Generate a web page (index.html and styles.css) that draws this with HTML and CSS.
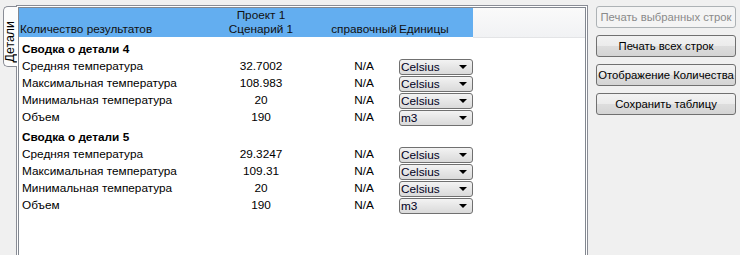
FILE: index.html
```html
<!DOCTYPE html>
<html lang="ru">
<head>
  <meta charset="UTF-8">
  <title>Детали</title>
  <link rel="stylesheet" href="styles.css">
</head>
<body>
  <div class="window">
    <div class="tabs">
      <div class="tab"><span>Детали</span></div>
      <div class="pane">
        <div class="grid">
          <table class="results">
            <colgroup>
              <col class="c-name">
              <col class="c-val">
              <col class="c-ref">
              <col class="c-unit">
              <col>
            </colgroup>
            <thead>
              <tr>
                <th class="h-name">Количество результатов</th>
                <th>Проект 1<br>Сценарий 1</th>
                <th>справочный</th>
                <th class="h-unit">Единицы</th>
                <th class="h-rest"></th>
              </tr>
            </thead>
            <tbody>
              <tr class="group"><td colspan="5">Сводка о детали 4</td></tr>
              <tr>
                <td class="name">Средняя температура</td><td class="val">32.7002</td><td class="val">N/A</td>
                <td class="unit"><div class="combo">Celsius</div></td><td></td>
              </tr>
              <tr>
                <td class="name">Максимальная температура</td><td class="val">108.983</td><td class="val">N/A</td>
                <td class="unit"><div class="combo">Celsius</div></td><td></td>
              </tr>
              <tr>
                <td class="name">Минимальная температура</td><td class="val">20</td><td class="val">N/A</td>
                <td class="unit"><div class="combo">Celsius</div></td><td></td>
              </tr>
              <tr>
                <td class="name">Объем</td><td class="val">190</td><td class="val">N/A</td>
                <td class="unit"><div class="combo">m3</div></td><td></td>
              </tr>
              <tr class="group"><td colspan="5">Сводка о детали 5</td></tr>
              <tr>
                <td class="name">Средняя температура</td><td class="val">29.3247</td><td class="val">N/A</td>
                <td class="unit"><div class="combo">Celsius</div></td><td></td>
              </tr>
              <tr>
                <td class="name">Максимальная температура</td><td class="val">109.31</td><td class="val">N/A</td>
                <td class="unit"><div class="combo">Celsius</div></td><td></td>
              </tr>
              <tr>
                <td class="name">Минимальная температура</td><td class="val">20</td><td class="val">N/A</td>
                <td class="unit"><div class="combo">Celsius</div></td><td></td>
              </tr>
              <tr>
                <td class="name">Объем</td><td class="val">190</td><td class="val">N/A</td>
                <td class="unit"><div class="combo">m3</div></td><td></td>
              </tr>
            </tbody>
          </table>
        </div>
      </div>
    </div>

    <div class="side">
      <button class="btn" disabled>Печать выбранных строк</button>
      <button class="btn">Печать всех строк</button>
      <button class="btn">Отображение Количества</button>
      <button class="btn">Сохранить таблицу</button>
    </div>
  </div>
</body>
</html>
```

FILE: styles.css
```css
html, body {
  margin: 0;
  padding: 0;
}

body {
  background: #f0f0f0;
  font-family: "Liberation Sans", Arial, sans-serif;
  font-size: 11.8px;
  color: #000;
  overflow: hidden;
}

.window {
  display: flex;
  height: 255px;
}

/* вкладки слева */
.tabs {
  display: flex;
  align-items: flex-start;
  padding: 5px 0 0 3px;
}

.tab {
  position: relative;
  z-index: 1;
  width: 14px;
  height: 61px;
  box-sizing: border-box;
  padding-top: 14px;
  margin-top: 1px;
  margin-right: -1px;
  background: #fcfcfc;
  border: 1px solid #898c95;
  border-right: 0;
  border-radius: 5px 0 0 5px;
}
.tab span {
  display: block;
  writing-mode: vertical-rl;
  transform: rotate(180deg);
  font-size: 12.4px;
  line-height: 13px;
}

.pane {
  width: 572px;
  height: 262px;
  padding: 1px;
  background: #fff;
  border: 1px solid #898c95;
  box-sizing: border-box;
}

.grid {
  height: 100%;
  border: 1px solid #828790;
  box-sizing: border-box;
  background: #fff;
}

.results {
  width: 566px;
  table-layout: fixed;
  border-collapse: collapse;
  border-spacing: 0;
}
.c-name { width: 174px; }
.c-val  { width: 136px; }
.c-ref  { width: 70px; }
.c-unit { width: 74px; }

.results th {
  height: 28px;
  padding: 0 0 1px;
  box-sizing: border-box;
  vertical-align: bottom;
  font-weight: normal;
  line-height: 14px;
  color: #111;
  background: #63aef0;
  white-space: nowrap;
}
.results .h-name {
  text-align: left;
  padding-left: 1px;
}
.results .h-unit {
  text-align: left;
}
.results .h-rest {
  background: linear-gradient(#fafafa, #f1f2f4);
  border-bottom: 1px solid #e3e4e6;
}

.results td {
  height: 17px;
  padding: 0;
  line-height: 17px;
  white-space: nowrap;
}
.results .group td {
  height: 20px;
  padding: 3px 0 0 3px;
  font-weight: bold;
  box-sizing: border-box;
}
.results .name {
  padding-left: 3px;
}
.results .val {
  text-align: center;
}
.results .unit {
  height: 16px;
  vertical-align: top;
  padding-top: 1px;
}

.combo {
  position: relative;
  height: 16px;
  box-sizing: border-box;
  padding-left: 1px;
  line-height: 14px;
  border: 1px solid #707070;
  border-radius: 3px;
  background: linear-gradient(#f3f3f3, #e6e6e6 50%, #dadada);
  color: #000022;
}
.combo::after {
  content: "";
  position: absolute;
  right: 5px;
  top: 5px;
  border-left: 4px solid transparent;
  border-right: 4px solid transparent;
  border-top: 4px solid #000;
}

/* кнопки справа */
.side {
  display: flex;
  flex-direction: column;
  gap: 7px;
  width: 140px;
  margin-left: 8px;
  padding-top: 6px;
}

.btn {
  height: 22px;
  padding: 0;
  font-family: inherit;
  font-size: 11.3px;
  color: #000;
  white-space: nowrap;
  border: 1px solid #707070;
  border-radius: 3px;
  background: linear-gradient(#f2f2f2, #ebebeb 50%, #dddddd 51%, #d4d4d4);
}
.btn:disabled {
  color: #8a8a8a;
  border-color: #adb2b5;
  background: #f4f4f4;
}
```
